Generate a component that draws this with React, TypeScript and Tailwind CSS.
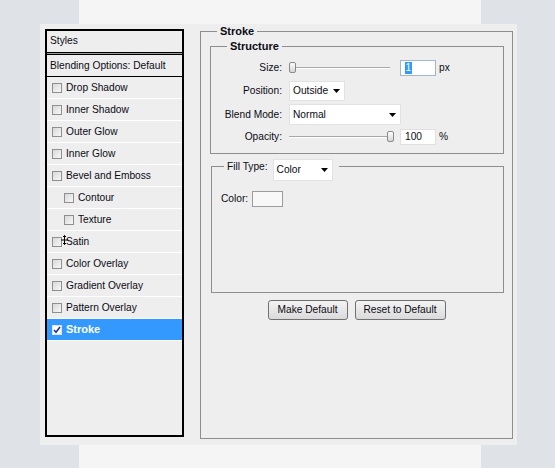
import React from 'react';

const FONT = "font-['Liberation_Sans',Arial,sans-serif]";

type StyleItem = { label: string; sub?: boolean; active?: boolean };

const styleItems: StyleItem[] = [
  { label: 'Drop Shadow' },
  { label: 'Inner Shadow' },
  { label: 'Outer Glow' },
  { label: 'Inner Glow' },
  { label: 'Bevel and Emboss' },
  { label: 'Contour', sub: true },
  { label: 'Texture', sub: true },
  { label: 'Satin' },
  { label: 'Color Overlay' },
  { label: 'Gradient Overlay' },
  { label: 'Pattern Overlay' },
  { label: 'Stroke', active: true },
];

const Checkbox = ({ checked }: { checked?: boolean }) => (
  <span
    className={`w-[10px] h-[10px] shrink-0 border flex items-center justify-center ${
      checked ? 'border-[#d8e4f4] bg-white' : 'border-[#8f8f8f] bg-linear-to-br from-[#d9d9d9] to-[#f7f7f7]'
    }`}
  >
    {checked && (
      <svg width="8" height="8" viewBox="0 0 8 8">
        <path d="M1 4l2 2.2L7 1" fill="none" stroke="#21308a" strokeWidth="1.6" />
      </svg>
    )}
  </span>
);

const Arrow = () => (
  <svg width="7" height="4" viewBox="0 0 7 4" className="shrink-0">
    <path d="M0 0h7L3.5 4z" fill="#000" />
  </svg>
);

const Select = ({ value, width, height }: { value: string; width: string; height: string }) => (
  <div className={`${width} ${height} bg-white border border-[#e2e2e2] flex items-center justify-between pl-[3px] pr-[4px]`}>
    <span>{value}</span>
    <Arrow />
  </div>
);

const Slider = ({ thumb }: { thumb: string }) => (
  <div className="relative w-[101px] h-[12px] shrink-0">
    <div className="absolute left-0 right-0 top-[5px] h-[2px] border-t border-[#a8a8a8] bg-white" />
    <div
      className={`absolute top-0 ${thumb} w-[7px] h-[11px] rounded-[2px] border border-[#8a8a8a] bg-linear-to-b from-white to-[#d6d6d6]`}
    />
  </div>
);

const StyleRow = ({ item }: { item: StyleItem }) => (
  <div
    className={`h-[22px] border-b border-white flex items-center gap-[4px] ${item.sub ? 'pl-[17px]' : 'pl-[5px]'} ${
      item.active ? 'bg-[#3399ff] text-white font-bold text-[11px]' : ''
    }`}
  >
    <Checkbox checked={item.active} />
    <span>{item.label}</span>
  </div>
);

export default function App() {
  return (
    <div className={`w-[555px] h-[468px] bg-[#dfe2e7] flex flex-col overflow-hidden text-[10.2px] text-[#0b0b14] ${FONT}`}>
      <div className="h-[24px] ml-[79px] w-[402px] bg-[#f5f5f5] shrink-0" />

      <div className="ml-[40px] w-[477px] h-[421px] bg-[#eeeeee] flex items-start shrink-0">
        {/* styles list */}
        <div className="relative mt-[5px] ml-[5px] w-[139px] h-[408px] border-2 border-black bg-[#eeeeee]">
          <div className="h-[21px] flex items-center pl-[3px] pb-[2px]">Styles</div>
          <div className="h-[3px] border-y border-black bg-[#9a9a9a]" />
          <div className="h-[22px] flex items-center pl-[3px] border-b border-black">Blending Options: Default</div>
          {styleItems.map((item) => (
            <StyleRow key={item.label} item={item} />
          ))}
          {/* mouse cursor over Satin */}
          <svg width="9" height="10" viewBox="0 0 9 10" className="absolute left-[13px] top-[204px]">
            <path d="M4.5 0.5v9M1 5h7" stroke="#000" strokeWidth="1" />
            <path d="M3 2l1.5-1.5L6 2M3 8l1.5 1.5L6 8" fill="none" stroke="#000" strokeWidth="1" />
          </svg>
        </div>

        {/* stroke settings */}
        <fieldset className="ml-[16px] mt-[1px] w-[313px] h-[414px] border border-[#8e8e8e]">
          <legend className="ml-[16px] px-[3px] font-bold text-[11px] leading-[13px]">Stroke</legend>

          <fieldset className="ml-[9px] mt-[2px] w-[294px] h-[114px] border border-[#8e8e8e]">
            <legend className="ml-[16px] px-[3px] font-bold text-[11px] leading-[13px]">Structure</legend>

            <div className="flex items-center h-[22px] mt-[4px]">
              <span className="w-[71px] text-right">Size:</span>
              <div className="ml-[7px]">
                <Slider thumb="left-0" />
              </div>
              <div className="ml-[10px] w-[36px] h-[16px] bg-white border border-[#9fb6d6] flex items-center pl-[4px]">
                <span className="bg-[#3399ff] text-white px-[0.5px] leading-[12px]">1</span>
              </div>
              <span className="ml-[3px]">px</span>
            </div>

            <div className="flex items-center h-[24px]">
              <span className="w-[71px] text-right">Position:</span>
              <div className="ml-[7px]">
                <Select value="Outside" width="w-[56px]" height="h-[20px]" />
              </div>
            </div>

            <div className="flex items-center h-[23px]">
              <span className="w-[71px] text-right">Blend Mode:</span>
              <div className="ml-[7px]">
                <Select value="Normal" width="w-[112px]" height="h-[21px]" />
              </div>
            </div>

            <div className="flex items-center h-[21px]">
              <span className="w-[71px] text-right">Opacity:</span>
              <div className="ml-[7px]">
                <Slider thumb="left-[98px]" />
              </div>
              <div className="ml-[10px] w-[36px] h-[16px] bg-white border border-[#e0e0e0] flex items-center pl-[4px]">
                100
              </div>
              <span className="ml-[3px]">%</span>
            </div>
          </fieldset>

          <fieldset className="ml-[10px] mt-[5px] w-[293px] h-[134px] border border-[#8e8e8e]">
            <legend className="ml-[12px] pl-[3px] pr-[6px] h-[14px] flex items-start gap-[5px]">
              <span className="mt-[1px] leading-[13px]">Fill Type:</span>
              <Select value="Color" width="w-[60px]" height="h-[22px]" />
            </legend>

            <div className="flex items-center h-[16px] mt-[18px] pl-[9px] gap-[4px]">
              <span>Color:</span>
              <div className="w-[31px] h-[16px] bg-[#f8f8f8] border border-[#9c9c9c]" />
            </div>
          </fieldset>

          <div className="ml-[9px] w-[293px] mt-[7px] flex justify-center gap-[7px]">
            <button className="w-[80px] h-[20px] rounded-[3px] border border-[#707070] bg-linear-to-b from-[#f4f4f4] to-[#dadada]">
              Make Default
            </button>
            <button className="w-[91px] h-[20px] rounded-[3px] border border-[#707070] bg-linear-to-b from-[#f4f4f4] to-[#dadada]">
              Reset to Default
            </button>
          </div>
        </fieldset>
      </div>

      <div className="h-[23px] ml-[79px] w-[402px] bg-[#f5f5f5] shrink-0" />
    </div>
  );
}
